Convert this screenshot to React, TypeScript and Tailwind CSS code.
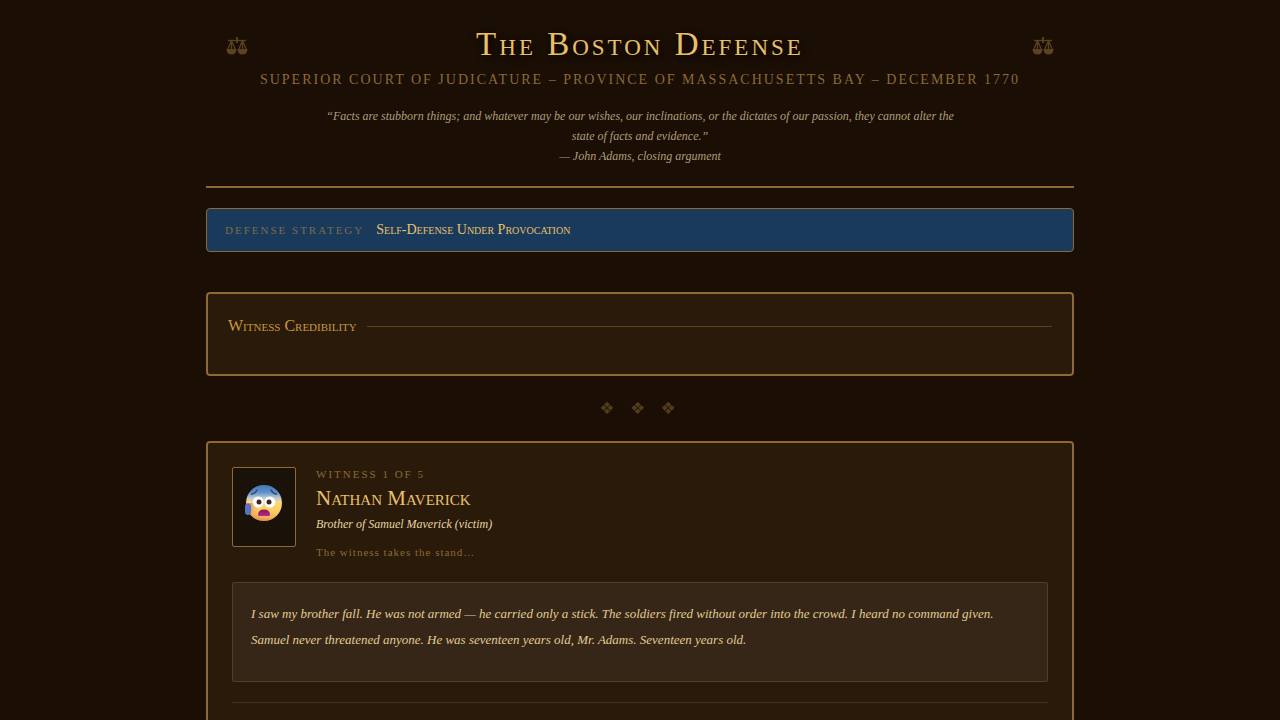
const witness = {
  number: 1,
  total: 5,
  name: 'Nathan Maverick',
  role: 'Brother of Samuel Maverick (victim)',
  status: 'The witness takes the stand…',
  testimony:
    'I saw my brother fall. He was not armed — he carried only a stick. The soldiers fired without order into the crowd. I heard no command given. Samuel never threatened anyone. He was seventeen years old, Mr. Adams. Seventeen years old.',
};

function Scales() {
  return (
    <svg viewBox="0 0 22 18" className="mt-1 h-[18px] w-[22px] text-[#5b4220]" fill="none" stroke="currentColor" aria-hidden="true">
      <path d="M11 0v6" strokeWidth="1.8" />
      <path d="M2 3.5h18" strokeWidth="1.3" />
      <path d="M5.5 3.5 1.5 13M5.5 3.5 9.5 13M5.5 3.5V13M16.5 3.5l-4 9.500M16.5 3.5l4 9.500M16.5 3.5V13" strokeWidth="1.3" />
      <path d="M.5 12h10q0 5.500-5 5.500t-5-5.500zM11.5 12h10q0 5.500-5 5.500t-5-5.500z" fill="currentColor" stroke="none" />
    </svg>
  );
}

function AnxiousFace() {
  return (
    <svg viewBox="0 0 40 40" className="size-10" role="img" aria-label="Anxious face">
      <defs>
        <linearGradient id="skin" x1="0" y1="0" x2="0" y2="1">
          <stop offset="0" stopColor="#4379b8" />
          <stop offset="0.2" stopColor="#5b8fca" />
          <stop offset="0.36" stopColor="#bccbd0" />
          <stop offset="0.48" stopColor="#fbdc7c" />
          <stop offset="0.8" stopColor="#fbc85c" />
          <stop offset="1" stopColor="#ee9a5a" />
        </linearGradient>
        <radialGradient id="shade" cx="0.75" cy="0.45" r="0.8">
          <stop offset="0.5" stopColor="#e0705c" stopOpacity="0" />
          <stop offset="1" stopColor="#d9604f" stopOpacity="0.6" />
        </radialGradient>
        <linearGradient id="mouth" x1="0" y1="0" x2="0" y2="1">
          <stop offset="0" stopColor="#8a1747" />
          <stop offset="1" stopColor="#b52a92" />
        </linearGradient>
      </defs>
      <circle cx="20" cy="20" r="18" fill="url(#skin)" />
      <path d="M2 20a18 18 0 0 0 36 0z" fill="url(#shade)" />
      <circle cx="14.2" cy="19" r="5.5" fill="#fff" />
      <circle cx="25.8" cy="19" r="5.5" fill="#fff" />
      <circle cx="15" cy="19" r="2.5" fill="#3b2630" />
      <circle cx="25" cy="19" r="2.5" fill="#3b2630" />
      <path d="M7.5 11.2q4-.8 5.5-4.2M32.5 11.2q-4-.8-5.500-4.200" fill="none" stroke="#3c4d74" strokeWidth="1.6" strokeLinecap="round" />
      <path d="M14 32q0-5.500 6-5.500t6 5.500q0 1-1 1H15q-1 0-1-1z" fill="url(#mouth)" />
      <path d="M1 23.5q0-3 3-3t3.2 3v5.500q-.4 3-3.2 3t-3-3z" fill="#5b72c4" />
    </svg>
  );
}

export default function App() {
  return (
    <div className="min-h-screen bg-[#1a0e05] px-4 py-5 font-['Liberation_Serif',serif] text-[#e8d5a3]">
      <div className="mx-auto max-w-[868px]">
        <header className="border-b-2 border-[#8b6a35] px-5 pt-1 pb-5 text-center">
          <div className="flex items-center justify-between">
            <Scales />
            <h1 className="text-[33px] leading-10 tracking-[3px] text-[#e8c06a] [font-variant:small-caps] text-shadow-[2px_2px_8px_#000000cc]">
              The Boston Defense
            </h1>
            <Scales />
          </div>
          <p className="mt-1 text-sm leading-6 tracking-[2px] text-[#8b6a35] uppercase">
            Superior Court of Judicature – Province of Massachusetts Bay – December 1770
          </p>
          <blockquote className="mx-auto mt-[14px] max-w-[640px] text-xs leading-5 text-[#af9e79] italic">
            “Facts are stubborn things; and whatever may be our wishes, our inclinations, or the dictates of our passion, they cannot alter the state of facts and evidence.”
            <br />— John Adams, closing argument
          </blockquote>
        </header>

        <section className="mt-5 flex items-center gap-3 rounded-sm border border-[#8b6a35] bg-[#1a3a5c] px-[18px] py-[9px]">
          <span className="text-[11px] leading-6 tracking-[2px] text-[#7c6a4c] uppercase">Defense Strategy</span>
          <span className="text-sm leading-6 text-[#e8c06a] [font-variant:small-caps]">
            Self-Defense Under Provocation
          </span>
        </section>

        <section className="mt-10 rounded-sm border-2 border-[#8b6a35] bg-[#2a1a0a] px-5 pt-5 pb-9">
          <div className="flex items-center gap-[10px]">
            <h2 className="text-base leading-6 text-[#c8983f] [font-variant:small-caps]">Witness Credibility</h2>
            <div className="h-px flex-1 bg-[#5b4320]" />
          </div>
        </section>

        <div className="my-5 text-center font-['DejaVu_Sans',sans-serif] text-[17px] leading-[25px] tracking-[5px] text-[#533c1d]" aria-hidden="true">
          ❖ ❖ ❖
        </div>

        <main className="rounded-sm border-2 border-[#8b6a35] bg-[#2a1a0a] p-6">
          <div className="flex gap-5">
            <div className="flex h-20 w-16 items-center justify-center rounded-xs border border-[#8b6a35] bg-[#1a1208] pb-2">
              <AnxiousFace />
            </div>
            <div>
              <p className="text-[11px] leading-[15px] tracking-[2px] text-[#8b6a35] uppercase">
                Witness {witness.number} of {witness.total}
              </p>
              <h2 className="text-[21px] leading-8 text-[#e8c06a] [font-variant:small-caps]">{witness.name}</h2>
              <p className="text-xs leading-5 text-[#e8d5a3] italic">{witness.role}</p>
              <p className="mt-2 text-[11px] leading-5 tracking-[1px] text-[#8b6a35]">{witness.status}</p>
            </div>
          </div>
          <div className="mt-5 min-h-[100px] rounded-xs border border-[#514021] bg-[#362618] px-[18px] py-[18px] text-[13px] leading-[26px] text-[#e0cc92] italic">
            {witness.testimony}
          </div>
          <div className="mt-5 h-10 border-t border-[#46311a]" />
        </main>
      </div>
    </div>
  );
}
